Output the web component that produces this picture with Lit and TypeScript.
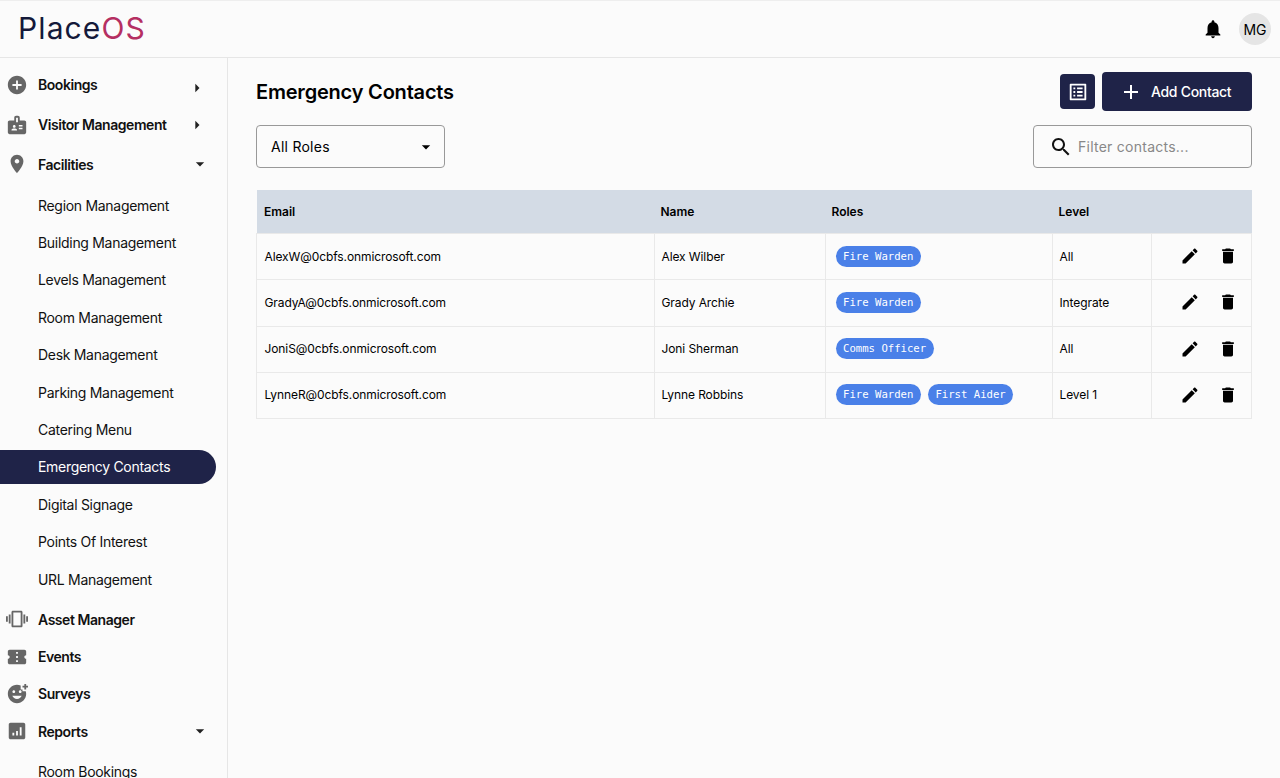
import {LitElement, html, css, svg} from 'lit';
import {customElement} from 'lit/decorators.js';

const icons: Record<string, string> = {
  add_circle: 'M12 2C6.48 2 2 6.48 2 12s4.48 10 10 10 10-4.48 10-10S17.52 2 12 2zm5 11h-4v4h-2v-4H7v-2h4V7h2v4h4v2z',
  badge: 'M20 7h-5V4c0-1.1-.9-2-2-2h-2c-1.1 0-2 .9-2 2v3H4c-1.1 0-2 .9-2 2v11c0 1.1.9 2 2 2h16c1.1 0 2-.9 2-2V9c0-1.1-.9-2-2-2zM9 12c.83 0 1.5.67 1.5 1.5S9.83 15 9 15s-1.5-.67-1.5-1.5S8.17 12 9 12zm3 6H6v-.75c0-1 2-1.5 3-1.5s3 .5 3 1.5V18zm1-9h-2V4h2v5zm5 7.5h-4V15h4v1.5zm0-3h-4V12h4v1.5z',
  place: 'M12 2C8.13 2 5 5.13 5 9c0 5.25 7 13 7 13s7-7.75 7-13c0-3.87-3.13-7-7-7zm0 9.5c-1.38 0-2.5-1.12-2.5-2.5s1.12-2.5 2.5-2.5 2.5 1.12 2.5 2.5-1.12 2.5-2.5 2.5z',
  vibration: 'M0 15h2V9H0v6zm3 2h2V7H3v10zm19-8v6h2V9h-2zm-3 8h2V7h-2v10zM16.5 3h-9C6.67 3 6 3.67 6 4.5v15c0 .83.67 1.5 1.5 1.5h9c.83 0 1.5-.67 1.5-1.5v-15c0-.83-.67-1.5-1.5-1.5zM16 19H8V5h8v14z',
  ticket: 'M22 10V6c0-1.11-.9-2-2-2H4c-1.1 0-1.99.89-1.99 2v4c1.1 0 1.99.9 1.99 2s-.89 2-2 2v4c0 1.1.9 2 2 2h16c1.1 0 2-.9 2-2v-4c-1.1 0-2-.9-2-2s.9-2 2-2zm-9 7.5h-2v-2h2v2zm0-4.5h-2v-2h2v2zm0-4.5h-2v-2h2v2z',
  reaction: 'M18 9V7h-2V2.84C14.77 2.3 13.42 2 11.99 2 6.47 2 2 6.48 2 12s4.47 10 9.99 10C17.52 22 22 17.52 22 12c0-1.05-.17-2.05-.47-3H18zm-2.5-1c.83 0 1.5.67 1.5 1.5s-.67 1.5-1.5 1.5-1.5-.67-1.5-1.5.67-1.5 1.5-1.5zm-7 0c.83 0 1.5.67 1.5 1.5S9.33 11 8.5 11 7 10.33 7 9.5 7.67 8 8.5 8zm3.5 9.5c-2.33 0-4.31-1.46-5.11-3.5h10.22c-.8 2.04-2.78 3.5-5.11 3.5zM22 3h2v2h-2v2h-2V5h-2V3h2V1h2v2z',
  assessment: 'M19 3H5c-1.1 0-2 .9-2 2v14c0 1.1.9 2 2 2h14c1.1 0 2-.9 2-2V5c0-1.1-.9-2-2-2zM9 17H7v-3h2v3zm4 0h-2v-5h2v5zm4 0h-2V8h2v9z',
  bell: 'M12 22c1.1 0 2-.9 2-2h-4c0 1.1.89 2 2 2zm6-6v-5c0-3.07-1.64-5.64-4.5-6.32V4c0-.83-.67-1.5-1.5-1.5s-1.5.67-1.5 1.5v.68C7.63 5.36 6 7.92 6 11v5l-2 2v1h16v-1l-2-2z',
  list_alt: 'M19 5v14H5V5h14m1.1-2H3.9c-.5 0-.9.4-.9.9v16.2c0 .4.4.9.9.9h16.2c.4 0 .9-.5.9-.9V3.9c0-.5-.5-.9-.9-.9zM11 7h6v2h-6V7zm0 4h6v2h-6v-2zm0 4h6v2h-6v-2zM7 7h2v2H7V7zm0 4h2v2H7v-2zm0 4h2v2H7v-2z',
  add: 'M19 13h-6v6h-2v-6H5v-2h6V5h2v6h6v2z',
  search: 'M15.5 14h-.79l-.28-.27C15.41 12.59 16 11.11 16 9.5 16 5.91 13.09 3 9.5 3S3 5.91 3 9.5 5.91 16 9.5 16c1.61 0 3.09-.59 4.23-1.57l.27.28v.79l5 4.99L20.49 19l-4.99-5zm-6 0C7.01 14 5 11.99 5 9.5S7.01 5 9.5 5 14 7.01 14 9.5 11.99 14 9.5 14z',
  edit: 'M3 17.25V21h3.75L17.81 9.94l-3.75-3.75L3 17.25zM20.71 7.04c.39-.39.39-1.02 0-1.41l-2.34-2.34c-.39-.39-1.02-.39-1.41 0l-1.83 1.83 3.75 3.75 1.83-1.83z',
  trash: 'M6 19c0 1.1.9 2 2 2h8c1.1 0 2-.9 2-2V7H6v12zM19 4h-3.5l-1-1h-5l-1 1H5v2h14V4z',
  right: 'M10 17l5-5-5-5v10z',
  down: 'M7 10l5 5 5-5H7z',
};

const icon = (name: string, size = 24) => html`<svg class="icon" width=${size} height=${size} viewBox="0 0 24 24" fill="currentColor">${svg`<path d=${icons[name]}></path>`}</svg>`;

const facilities = ['Region Management', 'Building Management', 'Levels Management', 'Room Management', 'Desk Management', 'Parking Management', 'Catering Menu', 'Emergency Contacts', 'Digital Signage', 'Points Of Interest', 'URL Management'];

const contacts = [
  {email: 'AlexW@0cbfs.onmicrosoft.com', name: 'Alex Wilber', roles: ['Fire Warden'], level: 'All'},
  {email: 'GradyA@0cbfs.onmicrosoft.com', name: 'Grady Archie', roles: ['Fire Warden'], level: 'Integrate'},
  {email: 'JoniS@0cbfs.onmicrosoft.com', name: 'Joni Sherman', roles: ['Comms Officer'], level: 'All'},
  {email: 'LynneR@0cbfs.onmicrosoft.com', name: 'Lynne Robbins', roles: ['Fire Warden', 'First Aider'], level: 'Level 1'},
];

@customElement('app-root')
export class AppRoot extends LitElement {
  static override styles = css`
    :host {
      display: flex;
      flex-direction: column;
      height: 778px;
      overflow: hidden;
      background: #fbfbfb;
      color: #000;
      font-family: Inter, 'Liberation Sans', sans-serif;
      font-size: 14px;
    }
    .icon { display: block; flex: none; }

    .topbar {
      flex: none;
      box-sizing: border-box;
      height: 58px;
      display: flex;
      align-items: center;
      padding: 0 9px 0 18px;
      border-top: 1px solid #eee;
      border-bottom: 1px solid #e6e6e6;
    }
    .logo {
      flex: 1;
      margin-bottom: 3px;
      font-size: 30px;
      font-weight: 400;
      letter-spacing: 1.1px;
      color: #14193a;
    }
    .logo span { color: #b52f62; }
    .avatar {
      width: 32px;
      height: 32px;
      margin-left: 15px;
      border-radius: 50%;
      background: #e5e5e5;
      display: flex;
      align-items: center;
      justify-content: center;
      font-size: 14px;
    }

    .body { flex: 1; display: flex; min-height: 0; }
    .side {
      flex: none;
      box-sizing: border-box;
      width: 228px;
      padding-top: 8.3px;
      border-right: 1px solid #e6e6e6;
      overflow: hidden;
    }
    .row {
      height: 37.4px;
      display: flex;
      align-items: center;
      font-size: 14px;
      letter-spacing: -0.3px;
      white-space: nowrap;
    }
    .row.top { font-weight: 600; letter-spacing: -0.45px; padding-left: 6px; color: #111; }
    .row.top > .icon { color: #666; margin-right: 10px; }
    .caret { margin-left: auto; color: #222; }
    .caret.right { margin-right: 20px; }
    .caret.down { margin-right: 17.5px; }
    .caret.low { margin-top: 6px; }
    .row.sub { padding-left: 38px; color: #111; }
    .row.sub.active {
      width: 216px;
      box-sizing: border-box;
      height: 34px;
      margin: 1.7px 0;
      background: #1f2348;
      color: #fff;
      border-radius: 0 17px 17px 0;
    }
    .spaced { margin-top: 2.2px; }
    .spaced-lg { margin-top: 3.6px; }
    .asset-gap { margin-top: 2.8px; }
    .last-gap { margin-top: 3px; }

    .main { flex: 1; box-sizing: border-box; padding: 14px 28px 0; min-width: 0; }
    .head { display: flex; align-items: center; height: 39px; }
    h1 { margin: 0; flex: 1; font-size: 20px; letter-spacing: -0.2px; line-height: 40px; font-weight: 600; }
    .btn {
      border: none;
      padding: 0;
      display: flex;
      align-items: center;
      background: #1f2348;
      color: #fff;
      border-radius: 4px;
      font: 500 14px Inter, sans-serif;
      letter-spacing: -0.3px;
    }
    .btn.square { width: 35px; height: 35px; margin-right: 7px; justify-content: center; }
    .btn.add { width: 150px; height: 39px; padding-left: 17px; gap: 8px; box-sizing: border-box; }
    .filters { display: flex; justify-content: space-between; margin-top: 14px; }
    .field {
      box-sizing: border-box;
      height: 43px;
      display: flex;
      align-items: center;
      border: 1px solid #999;
      border-radius: 4px;
      font-size: 14px;
      letter-spacing: 0.25px;
    }
    .field.select { width: 189px; padding: 0 8px 0 14px; justify-content: space-between; }
    .field.search { width: 219px; padding-left: 15px; gap: 5px; color: #888; }
    .field.search .icon { color: #111; }

    table {
      width: 995px;
      margin-top: 22px;
      border-collapse: collapse;
      table-layout: fixed;
      font-size: 12px;
    }
    th {
      height: 43px;
      padding: 0 0 0 6px;
      background: #d3dbe5;
      text-align: left;
      font-weight: 600;
    }
    th:first-child, td:first-child { padding-left: 7.5px; }
    td {
      height: 46.25px;
      padding: 0 0 1px 6.5px;
      box-sizing: border-box;
      border: 1px solid #e9e9e9;
      letter-spacing: -0.1px;
    }
    .chips { display: flex; gap: 7px; padding-left: 3px; }
    .chip {
      height: 21px;
      padding: 0 7.5px;
      display: flex;
      align-items: center;
      border-radius: 11px;
      background: #4a80e8;
      color: #fff;
      letter-spacing: 0;
      font-family: 'DejaVu Sans Mono', monospace;
      font-size: 10.63px;
    }
    .actions { display: flex; justify-content: flex-end; gap: 18px; padding-right: 13px; }
  `;

  private topRow(name: string, label: string, caret?: string, extra = '') {
    return html`<div class="row top ${extra}">
      ${icon(name, 22)}<span>${label}</span>
      ${caret ? html`<span class="caret ${caret} ${label === 'Bookings' ? 'low' : ''}">${icon(caret, 20)}</span>` : ''}
    </div>`;
  }

  override render() {
    return html`
      <header class="topbar">
        <div class="logo">Place<span>OS</span></div>
        ${icon('bell', 22)}
        <div class="avatar">MG</div>
      </header>
      <div class="body">
        <nav class="side">
          ${this.topRow('add_circle', 'Bookings', 'right')}
          ${this.topRow('badge', 'Visitor Management', 'right', 'spaced')}
          ${this.topRow('place', 'Facilities', 'down', 'spaced')}
          <div class="spaced-lg">
            ${facilities.map((f) => html`<div class="row sub ${f === 'Emergency Contacts' ? 'active' : ''}">${f}</div>`)}
          </div>
          ${this.topRow('vibration', 'Asset Manager', undefined, 'asset-gap')}
          ${this.topRow('ticket', 'Events')}
          ${this.topRow('reaction', 'Surveys')}
          ${this.topRow('assessment', 'Reports', 'down')}
          <div class="row sub last-gap">Room Bookings</div>
        </nav>
        <main class="main">
          <div class="head">
            <h1>Emergency Contacts</h1>
            <button class="btn square">${icon('list_alt', 22)}</button>
            <button class="btn add">${icon('add')}<span>Add Contact</span></button>
          </div>
          <div class="filters">
            <div class="field select"><span>All Roles</span>${icon('down', 20)}</div>
            <div class="field search">${icon('search')}<span>Filter contacts...</span></div>
          </div>
          <table>
            <colgroup>
              <col style="width:398px" /><col style="width:171px" /><col style="width:227px" /><col style="width:99px" /><col style="width:100px" />
            </colgroup>
            <thead><tr><th>Email</th><th>Name</th><th>Roles</th><th>Level</th><th></th></tr></thead>
            <tbody>
              ${contacts.map((c) => html`<tr>
                <td>${c.email}</td>
                <td>${c.name}</td>
                <td><div class="chips">${c.roles.map((r) => html`<span class="chip">${r}</span>`)}</div></td>
                <td>${c.level}</td>
                <td><div class="actions">${icon('edit', 20)}${icon('trash', 20)}</div></td>
              </tr>`)}
            </tbody>
          </table>
        </main>
      </div>
    `;
  }
}
